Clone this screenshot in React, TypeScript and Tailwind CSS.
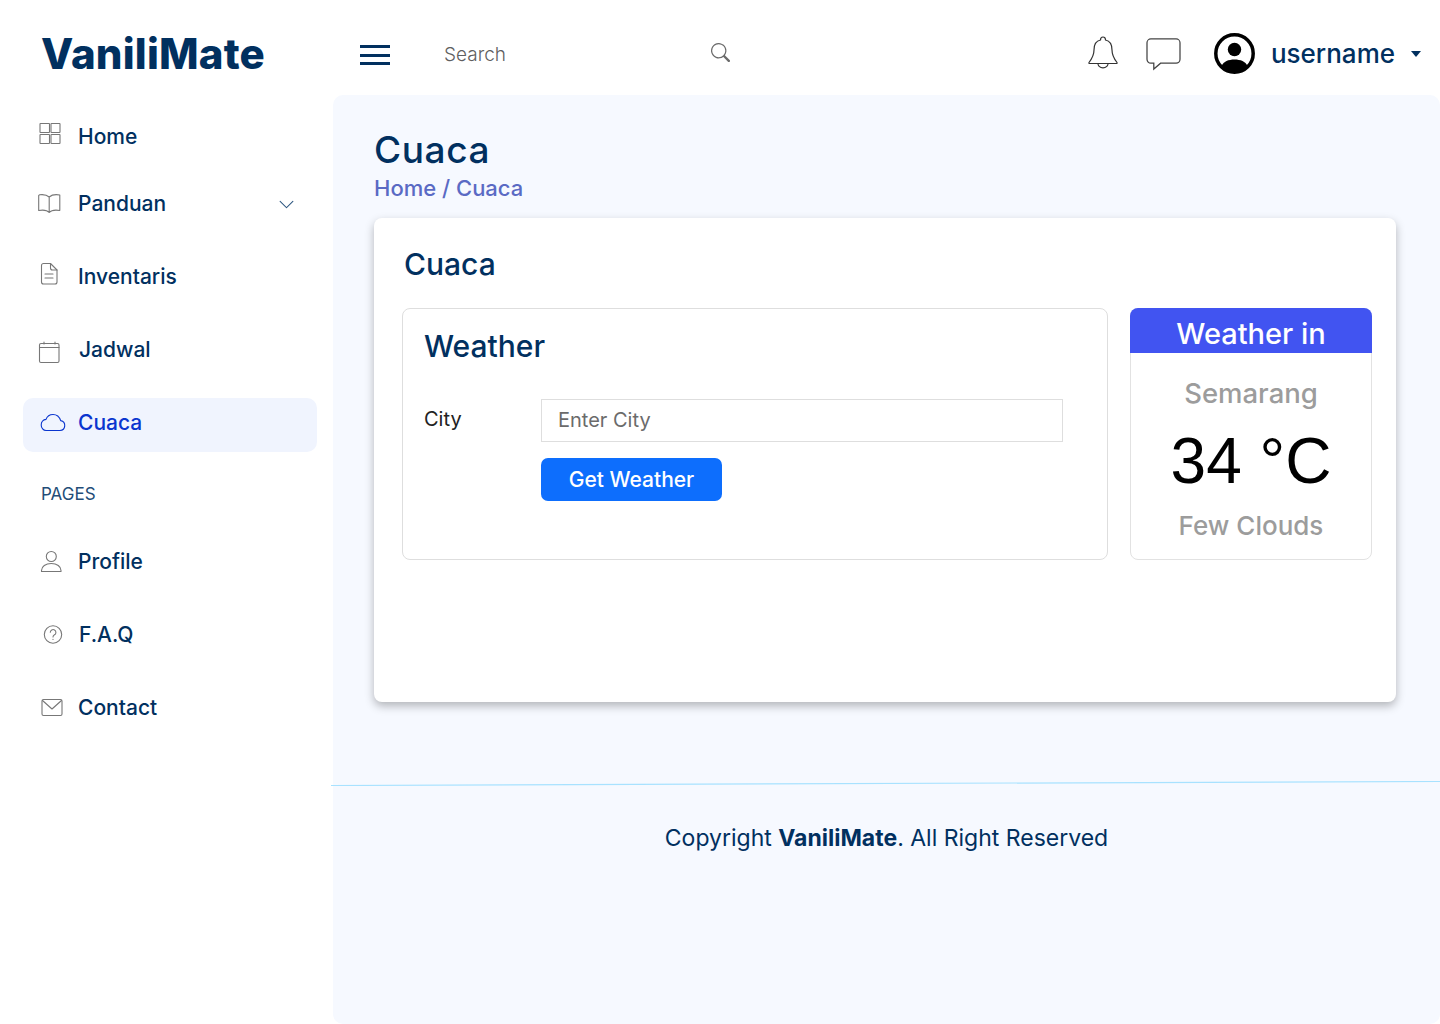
import type { ReactNode } from "react";
import { BsChevronDown, BsSearch } from "react-icons/bs";

function NavIcon({ children }: { children: ReactNode }) {
  return (
    <svg
      width="27"
      height="27"
      viewBox="0 0 27 27"
      fill="none"
      stroke="currentColor"
      strokeWidth="1.1"
      strokeLinejoin="round"
      strokeLinecap="round"
      className="shrink-0 -translate-y-px overflow-visible"
    >
      {children}
    </svg>
  );
}

function NavItem({
  icon,
  label,
  gap = "gap-[13px]",
  active = false,
  chevron = false,
}: {
  icon: ReactNode;
  label: string;
  gap?: string;
  active?: boolean;
  chevron?: boolean;
}) {
  return (
    <div
      className={`flex h-[54px] items-center rounded-[10px] pb-[4px] pl-[15px] pr-[22px] text-[21px] font-medium ${gap} ${
        active ? "bg-[#f0f4fe] text-[#0a35cf]" : "text-[#01305f]"
      }`}
    >
      <span className={active ? "flex text-[#0a35cf]" : "flex text-[#777777]"}>{icon}</span>
      <span className="flex-1">{label}</span>
      {chevron && <BsChevronDown className="text-[17px] text-[#2c5680]" />}
    </div>
  );
}

export default function App() {
  return (
    <div className="flex min-h-[1024px] flex-col bg-white font-['Inter','Liberation_Sans',sans-serif]">
      <header className="flex h-[95px] items-center pt-[12px]">
        <div className="w-[333px] pl-[41px] text-[42px] font-extrabold tracking-[0.2px] text-[#01305f]">VaniliMate</div>
        <div className="ml-[27px] flex w-[30px] flex-col gap-[5.5px] pt-[3px]">
          <span className="h-[3px] bg-[#01305f]" />
          <span className="h-[3px] bg-[#01305f]" />
          <span className="h-[3px] bg-[#01305f]" />
        </div>
        <div className="ml-[54px] flex w-[286px] items-center justify-between">
          <span className="pt-[3px] text-[19px] font-light text-[#5f5f5f]">Search</span>
          <BsSearch className="mb-[3px] text-[19px] text-[#6b6b6b]" />
        </div>
        <div className="ml-auto flex items-center pr-[19px]">
          <svg width="30" height="35" viewBox="0 0 30 35" fill="none" stroke="#333333" strokeWidth="1.2" strokeLinejoin="round">
            <path d="M15 1c-1.5 0-2.5 1-2.500 3C7 5 6 9 6 14c0 5-1.500 8-5 12.500-.3.500 0 1 .5 1h27c.5 0 .8-.5.5-1C25.500 22 24 19 24 14c0-5-1-9-6.500-10C17.500 2 16.500 1 15 1z" />
            <path d="M9.800 27.500a5.300 5.300 0 0 0 10.400 0" />
          </svg>
          <svg width="35" height="33" viewBox="0 0 36 34" fill="none" stroke="#444444" strokeWidth="1.3" className="ml-[28px] mt-[2px]">
            <path d="M5 1h26a4 4 0 0 1 4 4v17a4 4 0 0 1-4 4H15l-7 6v-6H5a4 4 0 0 1-4-4V5a4 4 0 0 1 4-4z" />
          </svg>
          <svg width="41" height="41" viewBox="0 0 41 41" className="ml-[33px]">
            <circle cx="20.500" cy="20.500" r="18.700" fill="none" stroke="#000000" strokeWidth="3.500" />
            <circle cx="20.500" cy="16.500" r="6.700" fill="#000000" />
            <path d="M7.500 33c2-4.500 7-6.500 13-6.500s11 2 13 6.500a18 18 0 0 1-26 0z" fill="#000000" />
          </svg>
          <span className="ml-[16px] text-[26px] font-medium text-[#01305f]">username</span>
          <span className="ml-[16px] h-0 w-0 border-x-[5px] border-t-[6px] border-x-transparent border-t-[#01305f]" />
        </div>
      </header>

      <div className="flex flex-1">
        <aside className="flex w-[333px] flex-col pl-[23px] pr-[16px] pt-[17px]">
          <NavItem
            label="Home"
            icon={
              <NavIcon>
                <rect x="2" y="0.500" width="9.500" height="9" rx="0.500" />
                <rect x="13" y="0.500" width="9" height="9" rx="0.500" />
                <rect x="2" y="11.500" width="9.500" height="9" rx="0.500" />
                <rect x="13" y="11.500" width="9" height="9" rx="0.500" />
              </NavIcon>
            }
          />
          <div className="mt-[13px] flex flex-col gap-[19px]">
            <NavItem
              label="Panduan"
              chevron
              icon={
                <NavIcon>
                  <path d="M11.200 7C9 5 5 4.300 1.500 4.800L0.700 5.500V20.500C5 19.800 9 20 11.200 22.500C13.500 20 17.500 19.800 21.800 20.500V5C18 4.300 13.500 5 11.200 7V22.500" />
                </NavIcon>
              }
            />
            <NavItem
              label="Inventaris"
              icon={
                <NavIcon>
                  <path d="M5.500 0.500h7l6.500 6.500v12a2 2 0 0 1-2 2H5.500a2 2 0 0 1-2-2V2.500a2 2 0 0 1 2-2z" />
                  <path d="M12.500 0.500v4.500a2 2 0 0 0 2 2H19" />
                  <path d="M7 11h8M7 15h8" />
                </NavIcon>
              }
            />
            <NavItem
              label="Jadwal"
              gap="gap-[14px]"
              icon={
                <NavIcon>
                  <rect x="1.500" y="7.500" width="19.500" height="19" rx="1.500" />
                  <path d="M1.500 11.500H21M6 6v2M17 6v2" />
                </NavIcon>
              }
            />
            <NavItem
              label="Cuaca"
              active
              icon={
                <NavIcon>
                  <path d="M8 21.500h14a5 5 0 0 0 .7-9.900C21.500 8 18.500 5.500 15 5.500c-3.200 0-5.900 1.900-7 4.900-2.800.300-4.800 2.700-4.800 5.500 0 3 2.200 5.600 4.800 5.600z" />
                </NavIcon>
              }
            />
          </div>
          <div className="flex h-[85px] items-start pl-[18px] pt-[30px] text-[17px] text-[#234d78]">PAGES</div>
          <div className="flex flex-col gap-[19px]">
            <NavItem
              label="Profile"
              icon={
                <NavIcon>
                  <circle cx="13.300" cy="8.500" r="5" />
                  <path d="M3.500 23.500h19.500v-1c0-4-4-7-9.700-7s-9.800 3-9.800 7z" />
                </NavIcon>
              }
            />
            <NavItem
              label="F.A.Q"
              gap="gap-[14px]"
              icon={
                <NavIcon>
                  <circle cx="15" cy="13.500" r="8.700" />
                  <path d="M12.300 11.300a2.800 2.800 0 1 1 4.200 2.500c-1 .6-1.500 1-1.500 2.200M15 18.300v.2" />
                </NavIcon>
              }
            />
            <NavItem
              label="Contact"
              icon={
                <NavIcon>
                  <rect x="4" y="5.500" width="20" height="16" rx="1.500" />
                  <path d="M4.500 6.500L14 15l9.500-8.500" />
                </NavIcon>
              }
            />
          </div>
        </aside>

        <main className="flex flex-1 flex-col rounded-[10px] bg-[#f6f9ff]">
          <div className="pl-[41px] pr-[44px] pt-[30px]">
            <h1 className="text-[37px] font-medium leading-[50px] tracking-[0.6px] text-[#01305f]">Cuaca</h1>
            <p className="pt-px text-[22px] font-medium leading-[25px] text-[#5a6ac4]">Home / Cuaca</p>
            <section className="mt-[17px] h-[484px] rounded-[8px] bg-white pl-[28px] pr-[24px] pt-[24px] shadow-[0_4px_10px_rgba(0,0,0,0.28)]">
              <h2 className="pl-[2px] text-[30px] font-medium leading-[44px] text-[#01305f]">Cuaca</h2>
              <div className="mt-[22px] flex gap-[22px]">
                <div className="h-[252px] flex-1 rounded-[8px] border border-[#dedede] pl-[21px] pr-[44px] pt-[16px]">
                  <h3 className="text-[30px] font-medium leading-[42px] text-[#01305f]">Weather</h3>
                  <div className="mt-[32px] flex">
                    <label className="w-[117px] pt-[6px] text-[20px] leading-[28px] text-[#222222]">City</label>
                    <div className="flex-1">
                      <input
                        placeholder="Enter City"
                        className="h-[43px] w-full border border-[#dedede] px-[16px] pb-px text-[20px] outline-none placeholder:text-[#6b6b6b]"
                      />
                      <button className="mt-[16px] h-[43px] w-[181px] rounded-[7px] bg-[#0d6efd] text-[21px] font-medium text-white">
                        Get Weather
                      </button>
                    </div>
                  </div>
                </div>
                <div className="flex h-[252px] w-[242px] flex-col rounded-[8px] border border-[#e2e2e2] text-center">
                  <div className="-m-px h-[45px] rounded-t-[8px] bg-[#4154f1] pt-[3px] text-[29px] font-medium leading-[45px] text-white">Weather in</div>
                  <div className="mt-[23px] text-[27.5px] font-medium leading-[36px] text-[#9c9c9c]">Semarang</div>
                  <div className="mt-[15px] font-['Liberation_Sans',sans-serif] text-[64px] leading-[70px] text-black">34 °C</div>
                  <div className="mt-[12px] text-[26px] font-medium leading-[36px] text-[#9c9c9c]">Few Clouds</div>
                </div>
              </div>
            </section>
          </div>
          <svg viewBox="0 0 1109 5" preserveAspectRatio="none" className="ml-[-2px] mt-[79px] block h-[5px] w-[calc(100%+2px)]">
            <line x1="0" y1="4.500" x2="1109" y2="0.500" stroke="#a8e2ff" strokeWidth="1.200" />
          </svg>
          <p className="mt-[35px] text-center text-[23px] leading-[34px] text-[#01305f]">
            Copyright <strong className="font-bold">VaniliMate</strong>. All Right Reserved
          </p>
        </main>
      </div>
    </div>
  );
}
